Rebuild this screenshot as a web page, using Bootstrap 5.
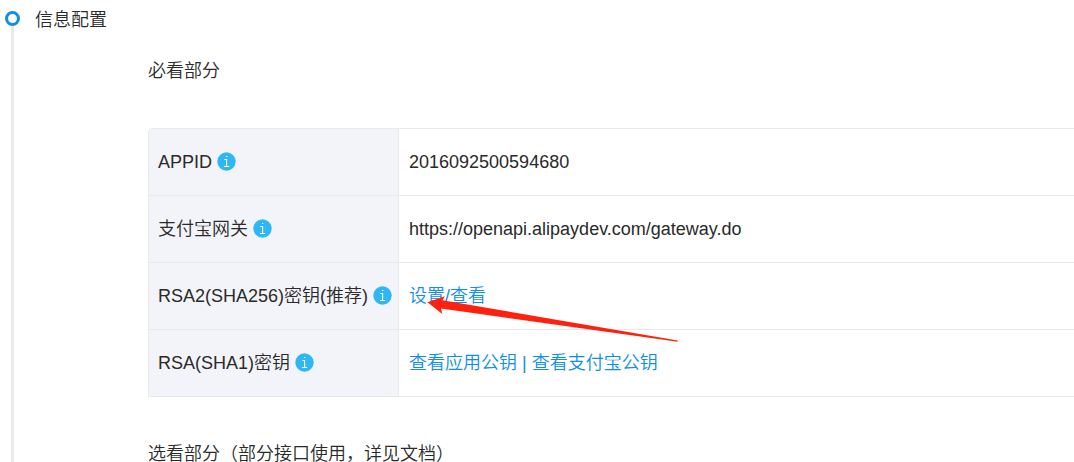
<!DOCTYPE html>
<html lang="zh-CN">
<head>
<meta charset="utf-8">
<meta name="viewport" content="width=device-width, initial-scale=1">
<title>信息配置</title>
<link href="https://cdn.jsdelivr.net/npm/bootstrap@5.3.0/dist/css/bootstrap.min.css" rel="stylesheet">
<style>
body { font-family: "Liberation Sans", "Noto Sans CJK SC", sans-serif; font-size: 18px; font-weight: 350; line-height: 26px; color: #2a2a2a; }
h1, h2 { font-size: 18px; font-weight: 350; line-height: 26px; margin: 0; }
.rail { width: 15px; margin-left: 5px; padding-top: 11px; }
.rail-dot { width: 15px; height: 15px; border: 3px solid #108ee9; border-radius: 50%; }
.rail-line { width: 3px; background: #e9e9e9; }
.step-body { margin-left: 15px; padding-top: 7px; }
.config-panel { margin-left: 113px; padding-top: 25px; }
.config-table { width: 100%; margin: 44px 0; color: inherit; table-layout: fixed; border-collapse: separate; border-spacing: 0; border-top: 1px solid #e9e9e9; border-left: 1px solid #e9e9e9; border-top-left-radius: 5px; }
.config-table th, .config-table td { height: 67px; padding: 0 0 0 10px; border-bottom: 1px solid #e9e9e9; font-weight: 350; vertical-align: middle; white-space: nowrap; }
.config-table th { width: 250px; background: #f3f4f9; border-right: 1px solid #e9e9e9; padding-left: 9px; }
.config-table tr:first-child th { border-top-left-radius: 4px; }
.config-table a { color: #108ee9; text-decoration: none; }
.info { width: 19px; height: 19px; margin: 0 0 2px 5px; flex: none; }
.pointer { left: 28px; top: 32px; width: 252px; height: 48px; pointer-events: none; }
</style>
</head>
<body>
<svg class="d-none" aria-hidden="true">
  <symbol id="info" viewBox="0 0 19 19">
    <circle cx="9.500" cy="9.500" r="9.200" fill="#2db7f5"/>
    <path d="M9 4.500h1.400M7.300 7.500h2.300v7M7 14.500h5.200" fill="none" stroke="#fff" stroke-width="1.100"/>
  </symbol>
</svg>
<main class="d-flex vh-100 overflow-hidden">
  <div class="rail d-flex flex-column align-items-center flex-shrink-0">
    <div class="rail-dot flex-shrink-0"></div>
    <div class="rail-line flex-grow-1"></div>
  </div>
  <section class="step-body flex-grow-1">
    <h1>信息配置</h1>
    <div class="config-panel">
      <h2>必看部分</h2>
      <table class="config-table">
        <tbody>
          <tr>
            <th scope="row"><div class="d-flex align-items-center">APPID<svg class="info"><use href="#info"/></svg></div></th>
            <td>2016092500594680</td>
          </tr>
          <tr>
            <th scope="row"><div class="d-flex align-items-center">支付宝网关<svg class="info"><use href="#info"/></svg></div></th>
            <td>https://openapi.alipaydev.com/gateway.do</td>
          </tr>
          <tr>
            <th scope="row"><div class="d-flex align-items-center">RSA2(SHA256)密钥(推荐)<svg class="info"><use href="#info"/></svg></div></th>
            <td class="position-relative">
              <a href="#">设置/查看</a>
              <svg class="pointer position-absolute" viewBox="0 0 252 48" aria-hidden="true"><path d="M.5 7.300 17.700 1.300 15.500 5.300 250.700 45.500v1.200L14 13.500l1.300 5.500Z" fill="#ff2010"/></svg>
            </td>
          </tr>
          <tr>
            <th scope="row"><div class="d-flex align-items-center">RSA(SHA1)密钥<svg class="info"><use href="#info"/></svg></div></th>
            <td><a href="#">查看应用公钥</a> <a href="#">|</a> <a href="#">查看支付宝公钥</a></td>
          </tr>
        </tbody>
      </table>
      <h2>选看部分（部分接口使用，详见文档）</h2>
    </div>
  </section>
</main>
<script src="https://cdn.jsdelivr.net/npm/bootstrap@5.3.0/dist/js/bootstrap.bundle.min.js"></script>
</body>
</html>
